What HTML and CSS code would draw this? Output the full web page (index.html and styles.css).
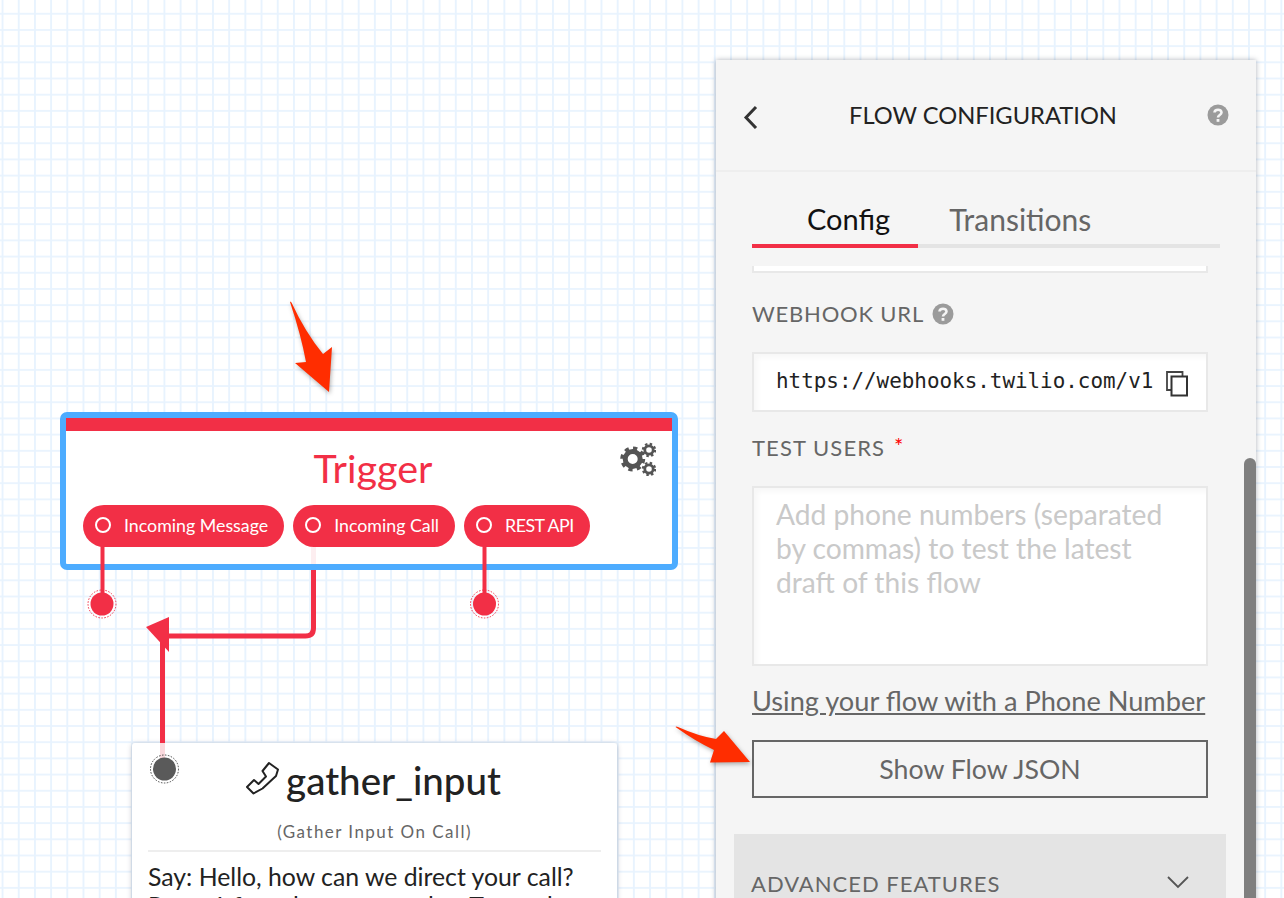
FILE: index.html
```html
<!DOCTYPE html>
<html lang="en">
<head>
<meta charset="utf-8">
<title>Flow Configuration</title>
<link rel="stylesheet" href="styles.css">
</head>
<body>
<main class="canvas">
  <section class="node trigger">
    <div class="trigger-bar"></div>
    <svg class="gears" viewBox="0 0 36 34" width="36" height="34">
      <g fill="none" stroke="#555">
        <circle cx="12.7" cy="17" r="7.5" stroke-width="5"/>
        <circle cx="12.7" cy="17" r="10.5" stroke-width="4" stroke-dasharray="4.1 4.15"/>
        <circle cx="29" cy="8" r="4.2" stroke-width="2.8"/>
        <circle cx="29" cy="8" r="6" stroke-width="2.4" stroke-dasharray="2.4 2.31"/>
        <circle cx="29" cy="27" r="4.2" stroke-width="2.8"/>
        <circle cx="29" cy="27" r="6" stroke-width="2.4" stroke-dasharray="2.4 2.31"/>
      </g>
    </svg>
    <h2 class="trigger-title">Trigger</h2>
    <div class="pills">
      <span class="pill"><i class="pill-dot"></i>Incoming Message</span>
      <span class="pill"><i class="pill-dot"></i>Incoming Call</span>
      <span class="pill caps"><i class="pill-dot"></i>REST API</span>
    </div>
  </section>

  <section class="node card">
    <h2 class="card-title">
      <svg class="phone" viewBox="0 0 34 34" width="34" height="34">
        <path d="M2 26L9 19L13.500 23L21 15.500L17.500 10L24 2L33 8.500L31 15L17.500 27.500L8.500 32.500Z" fill="none" stroke="#222" stroke-width="2" stroke-linejoin="round"/>
      </svg>
      <span>gather_input</span>
    </h2>
    <p class="card-sub">(Gather Input On Call)</p>
    <p class="card-text">Say: Hello, how can we direct your call? Press 1 for sales, or say sales. To reach support, press 2 or say support.</p>
  </section>

  <svg class="wires" width="700" height="898" viewBox="0 0 700 898">
    <path class="wire thin" d="M102.500 545V600"/>
    <path class="wire thin" d="M484.500 545V600"/>
    <path class="wire" d="M313.500 570V628Q313.500 636 305.500 636H165"/>
    <path class="wire fade light" d="M313.500 547V564"/>
    <path class="wire" d="M162.500 640V743"/>
    <path class="wire fade" d="M162.500 743V760"/>
    <polygon class="wire-head" points="146,627 169,617 169,652"/>
    <circle class="port" cx="102" cy="604" r="11.500"/>
    <circle class="port-ring" cx="102" cy="604" r="14"/>
    <circle class="port" cx="484.500" cy="604" r="11.500"/>
    <circle class="port-ring" cx="484.500" cy="604" r="14"/>
    <circle class="port grey" cx="164.500" cy="769" r="11.500"/>
    <circle class="port-ring grey" cx="164.500" cy="769" r="14"/>
  </svg>

  <aside class="panel">
    <header class="panel-head">
      <svg class="back" viewBox="0 0 16 24" width="16" height="24"><path d="M13 2L3 12.500L13 23" fill="none" stroke="#333" stroke-width="3"/></svg>
      <h1 class="panel-title">FLOW CONFIGURATION</h1>
      <svg class="help" viewBox="0 0 22 22" width="22" height="22">
        <circle cx="11" cy="11" r="10.500" fill="#9b9b9b"/>
        <path d="M7.500 8.500C7.700 4.800 14.500 4.700 14.500 8.500C14.500 11 11 11 11 13.500" fill="none" stroke="#f5f5f5" stroke-width="2.600"/>
        <rect x="9.600" y="15" width="2.800" height="2.800" fill="#f5f5f5"/>
      </svg>
    </header>
    <div class="panel-body">
      <nav class="tabs">
        <span class="tab active">Config</span>
        <span class="tab">Transitions</span>
      </nav>
      <div class="stub"></div>
      <div class="label webhook-label">WEBHOOK URL
        <svg class="help" viewBox="0 0 22 22" width="22" height="22">
          <circle cx="11" cy="11" r="10.500" fill="#9b9b9b"/>
          <path d="M7.500 8.500C7.700 4.800 14.500 4.700 14.500 8.500C14.500 11 11 11 11 13.500" fill="none" stroke="#f5f5f5" stroke-width="2.600"/>
          <rect x="9.600" y="15" width="2.800" height="2.800" fill="#f5f5f5"/>
        </svg>
      </div>
      <div class="field url-field">
        <span class="url">https://webhooks.twilio.com/v1</span>
        <svg class="copy" viewBox="0 0 24 28" width="24" height="28">
          <path d="M6 20H2V2H17.500V6" fill="none" stroke="#444" stroke-width="1.800"/>
          <rect x="6.500" y="6.500" width="15.500" height="19" fill="#fff" stroke="#333" stroke-width="2"/>
        </svg>
      </div>
      <div class="label users-label">TEST USERS <span class="req">*</span></div>
      <div class="field area">Add phone numbers (separated by commas) to test the latest draft of this flow</div>
      <a class="doc-link" href="#">Using your flow with a Phone Number</a>
      <button class="json-btn" type="button">Show Flow JSON</button>
      <div class="advanced">
        <span>ADVANCED FEATURES</span>
        <svg viewBox="0 0 24 14" width="24" height="14"><path d="M2 2L12 12L22 2" fill="none" stroke="#555" stroke-width="1.800"/></svg>
      </div>
    </div>
    <div class="scroll-thumb"></div>
  </aside>

  <svg class="callouts" width="1284" height="898" viewBox="0 0 1284 898">
    <path class="callout" d="M290 302Q289.500 301 291.500 302.500Q305 332 323 354L332 347L329 392L295 363L306 362Q301 335 290 302Z"/>
    <path class="callout" d="M675.500 727Q676 726 678 727Q698 736 716 739L724 731L750 762L710 762.500L714 750Q695 741 675.500 727Z"/>
  </svg>
</main>
</body>
</html>
```

FILE: styles.css
```css
* { box-sizing: border-box; }
html, body { margin: 0; height: 100%; }
body { overflow: hidden; font-family: "Lato", "Open Sans", sans-serif; color: #222; background: #fff; }

.canvas {
  position: relative;
  width: 1284px;
  height: 898px;
  overflow: hidden;
  background-color: #fff;
  background-image:
    linear-gradient(to right, #e8f3fe 1.5px, transparent 1.5px),
    linear-gradient(to bottom, #eaf4fe 1.5px, transparent 1.5px);
  background-size: 16.2px 16.2px;
  background-position: 1.6px -3.4px;
}

/* diagram nodes */
.node { position: absolute; background: #fff; }
.trigger {
  left: 60px;
  top: 412px;
  width: 618px;
  height: 158px;
  border: 6px solid #4dacff;
  border-radius: 7px;
}
.trigger-bar { height: 13px; background: #f22f46; }
.gears { position: absolute; top: 24px; right: 16px; }
.trigger-title {
  margin: 13px 0 0;
  height: 48px;
  padding-left: 8px;
  font-size: 39.5px;
  line-height: 48px;
  font-weight: 400;
  text-align: center;
  color: #f22f46;
}
.pills { display: flex; gap: 9px; margin: 13px 0 0 17px; }
.pill {
  display: flex;
  align-items: center;
  height: 42px;
  padding: 0 16px 2px 12px;
  border-radius: 21px;
  background: #f22f46;
  color: #fff;
  font-size: 17.8px;
  white-space: nowrap;
}
.pill.caps { letter-spacing: -.5px; }
.pill-dot {
  width: 16px;
  height: 16px;
  margin-right: 13px;
  border: 2px solid #fff;
  border-radius: 50%;
}

.card {
  left: 132px;
  top: 743px;
  width: 485px;
  height: 200px;
  padding: 0 16px;
  border-radius: 3px;
  box-shadow: 0 1px 5px rgba(60, 70, 90, .35);
}
.card-title {
  display: flex;
  justify-content: center;
  align-items: center;
  gap: 7px;
  height: 74px;
  margin: 0;
  padding-right: 3px;
  font-size: 38.5px;
  font-weight: 500;
  color: #222;
}
.phone { margin-top: -4px; }
.card-sub {
  margin: 0;
  height: 35px;
  padding-top: 4px;
  border-bottom: 2px solid #eee;
  font-size: 17px;
  line-height: 22px;
  letter-spacing: 1.45px;
  text-align: center;
  color: #666;
}
.card-text { margin: 11px 0 0; font-size: 24.8px; line-height: 28.5px; color: #222; }

/* connections */
.wires { position: absolute; left: 0; top: 0; pointer-events: none; }
.wire { fill: none; stroke: #f22f46; stroke-width: 5; }
.wire.thin { stroke-width: 4; }
.wire.fade { stroke: #fbd9dd; }
.wire.fade.light { stroke: #fdeef0; }
.wire-head { fill: #f22f46; }
.port { fill: #f22f46; }
.port.grey { fill: #5a5a5a; }
.port-ring { fill: none; stroke: #f22f46; stroke-width: 1; stroke-dasharray: 1.500 1.500; }
.port-ring.grey { stroke: #444; }

/* side panel */
.panel {
  position: absolute;
  left: 716px;
  top: 60px;
  bottom: -60px;
  width: 540px;
  background: #f5f5f5;
  box-shadow: 0 0 5px rgba(50, 60, 80, .4);
  overflow: hidden;
}
.panel-head {
  display: flex;
  align-items: center;
  justify-content: space-between;
  height: 112px;
  padding: 0 27px;
  border-bottom: 2px solid #eee;
}
.back { margin-top: 3px; }
.panel-title { margin: 0; font-size: 23.7px; font-weight: 400; color: #222; }
.panel-body { padding: 0 36px; }

.tabs {
  display: flex;
  width: 468px;
  height: 76px;
  padding-top: 26px;
  border-bottom: 4px solid #e4e4e4;
}
.tab {
  height: 50px;
  margin-bottom: -4px;
  padding: 0 31px;
  font-size: 30px;
  line-height: 42px;
  color: #666;
  border-bottom: 4px solid transparent;
}
.tab.active { padding: 0 28px 0 55px; font-size: 29px; color: #111; border-bottom-color: #f22f46; }

.stub {
  width: 456px;
  height: 7px;
  margin-top: 18px;
  border: 2px solid #e8e8e8;
  border-top: 0;
  background: #fff;
}
.label { font-size: 22px; line-height: 28px; letter-spacing: .8px; color: #666; }
.webhook-label { display: flex; align-items: center; gap: 8px; margin-top: 27px; }
.users-label { margin-top: 20px; letter-spacing: 1.1px; }
.req { color: #f00; font-size: 22px; vertical-align: 2px; margin-left: 2px; }

.field { width: 456px; border: 2px solid #e8e8e8; background: #fff; box-shadow: inset 4px 4px 5px rgba(0, 0, 0, .03); }
.url-field {
  display: flex;
  align-items: center;
  justify-content: space-between;
  height: 60px;
  margin-top: 24px;
  padding: 0 17px 0 22px;
}
.url { margin-top: -3px; font-family: "DejaVu Sans Mono", monospace; font-size: 20.9px; color: #222; }
.copy { margin-top: 3px; }
.area {
  height: 180px;
  margin-top: 24px;
  padding: 9px 22px;
  font-size: 28.2px;
  line-height: 34px;
  color: #c9c9c9;
}
.doc-link {
  display: block;
  margin-top: 17px;
  font-size: 27.2px;
  line-height: 36px;
  color: #666;
  white-space: nowrap;
}
.json-btn {
  display: block;
  width: 456px;
  height: 58px;
  margin-top: 21px;
  border: 2px solid #666;
  background: transparent;
  font: 400 26.7px "Lato", sans-serif;
  color: #666;
}
.advanced {
  display: flex;
  justify-content: space-between;
  width: 492px;
  height: 124px;
  margin: 36px 0 0 -18px;
  padding: 36px 36px 0 17px;
  background: #e4e4e4;
  font-size: 22px;
  line-height: 28px;
  letter-spacing: 1px;
  color: #666;
}
.advanced svg { margin-top: 5px; }
.scroll-thumb {
  position: absolute;
  left: 528px;
  top: 398px;
  width: 12px;
  height: 700px;
  border-radius: 6px 6px 0 0;
  background: #7f7f7f;
}

/* annotations */
.callouts { position: absolute; left: 0; top: 0; pointer-events: none; }
.callout { fill: #ff2d00; filter: drop-shadow(1px 2px 2px rgba(0, 0, 0, .3)); }
```
